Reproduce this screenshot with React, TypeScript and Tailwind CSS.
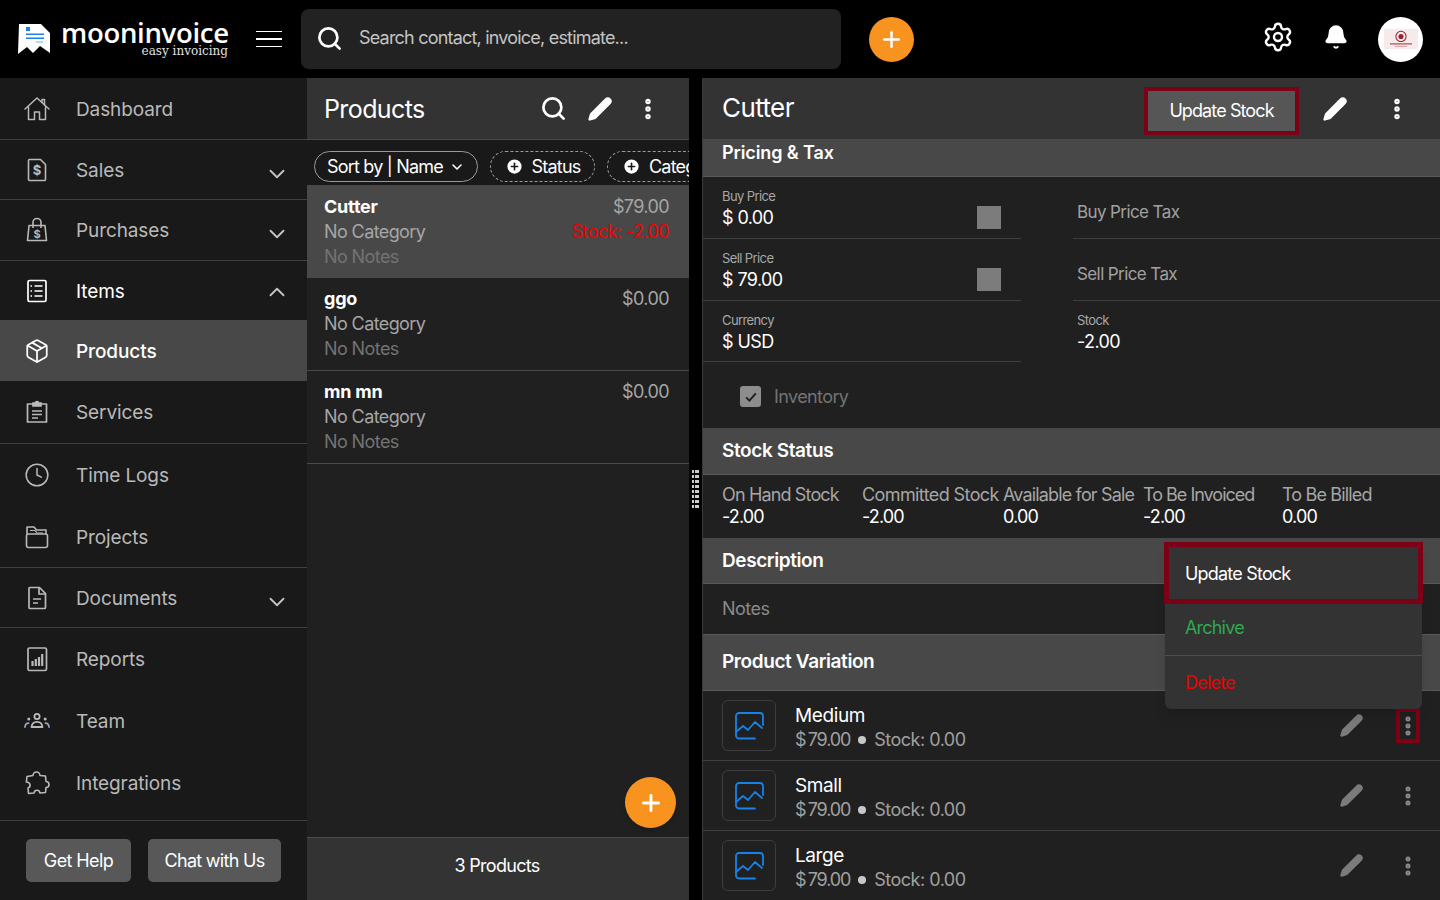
import { useState } from "react";
import {
  Bell,
  ChevronDown,
  ChevronUp,
  CirclePlus,
  Clock,
  MoreVertical,
  Package,
  Pencil,
  Plus,
  Search,
  Settings,
} from "lucide-react";

const iconCls = "w-[26px] h-[26px]";

const HomeIcon = () => (
  <svg viewBox="0 0 26 26" className={iconCls} fill="none" stroke="currentColor" strokeWidth="1.5" strokeLinejoin="round" strokeLinecap="round">
    <path d="M1 13L13 2l12 11" />
    <path d="M18 6.5V3.5h2.5V9" />
    <path d="M4.5 11v12.5h6V16h5v7.5h6V11" />
  </svg>
);

const SalesIcon = () => (
  <svg viewBox="0 0 26 26" className={iconCls} fill="none" stroke="currentColor" strokeWidth="1.6">
    <path d="M4.5 3.5a1 1 0 0 1 1-1h11l5 5v15a1 1 0 0 1-1 1h-15a1 1 0 0 1-1-1z" strokeLinejoin="round" />
    <text x="13" y="18" textAnchor="middle" fontSize="13" fontWeight="700" fill="currentColor" stroke="none">$</text>
  </svg>
);

const BagIcon = () => (
  <svg viewBox="0 0 26 26" className={iconCls} fill="none" stroke="currentColor" strokeWidth="1.6">
    <path d="M5 8.5h16l1.5 15h-19z" strokeLinejoin="round" />
    <path d="M9 11V5.5a4 4 0 0 1 8 0V11" />
    <text x="13" y="21" textAnchor="middle" fontSize="11" fontWeight="700" fill="currentColor" stroke="none">$</text>
  </svg>
);

const ItemsIcon = () => (
  <svg viewBox="0 0 26 26" className={iconCls} fill="none" stroke="currentColor" strokeWidth="1.7">
    <rect x="4" y="2.5" width="18" height="21" rx="1.5" />
    <path d="M10.5 8h8M10.5 13h8M10.5 18h8" />
    <path d="M6.5 8h1.5M6.5 13h1.5M6.5 18h1.5" />
  </svg>
);

const ServicesIcon = () => (
  <svg viewBox="0 0 26 26" className={iconCls} fill="none" stroke="currentColor" strokeWidth="1.7">
    <path d="M9 5H3.5v18h19V5H17" strokeLinejoin="round" />
    <path d="M9 7V4h2.5a1.5 1.5 0 0 1 3 0H17v3z" fill="currentColor" />
    <path d="M8 12h10M8 15.5h10M8 19h6" />
  </svg>
);

const FolderIcon = () => (
  <svg viewBox="0 0 26 26" className={iconCls} fill="none" stroke="currentColor" strokeWidth="1.6" strokeLinejoin="round">
    <path d="M3 10V3h7l2.5 3H22v4" />
    <path d="M6 6.5h5l2 2.5h6" strokeWidth="1.2" />
    <rect x="2.5" y="10" width="21" height="13.5" rx="2" />
  </svg>
);

const DocIcon = () => (
  <svg viewBox="0 0 26 26" className={iconCls} fill="none" stroke="currentColor" strokeWidth="1.7">
    <path d="M5 3.5a1 1 0 0 1 1-1h9.5l6 6v14a1 1 0 0 1-1 1H6a1 1 0 0 1-1-1z" strokeLinejoin="round" />
    <path d="M15 3v6h6M9 14h8M9 18h5" />
  </svg>
);

const ReportsIcon = () => (
  <svg viewBox="0 0 26 26" className={iconCls} fill="none" stroke="currentColor" strokeWidth="1.7">
    <rect x="4" y="2" width="18.5" height="22.5" rx="1.5" />
    <path d="M8.5 20v-5M11.8 20v-7M15 20v-9M18.2 20V8" strokeWidth="2.2" />
  </svg>
);

const TeamIcon = () => (
  <svg viewBox="0 0 26 26" className={iconCls} fill="none" stroke="currentColor" strokeWidth="1.8" strokeLinecap="round">
    <circle cx="13" cy="8.5" r="2.6" />
    <path d="M7.5 19c.4-3.6 2.600-5.200 5.500-5.200s5.100 1.600 5.500 5.200z" strokeLinejoin="round" />
    <circle cx="4.800" cy="11" r="1.500" fill="currentColor" stroke="none" />
    <circle cx="21.200" cy="11" r="1.500" fill="currentColor" stroke="none" />
    <path d="M1 19c.2-2.300 1.400-3.700 3.500-3.800M25 19c-.2-2.300-1.400-3.700-3.500-3.800" stroke="#8fa6c4" />
  </svg>
);

const PuzzleIcon = () => (
  <svg viewBox="0 0 26 26" className={iconCls} fill="none" stroke="currentColor" strokeWidth="1.6" strokeLinejoin="round">
    <path d="M9 5.500c0-2 1.600-3.500 3.500-3.500S16 3.500 16 5.500l5.500.5.500 5.500c1.800 0 3 1.300 3 3s-1.200 3-3 3l-.5 5-5.500.5c-.3-1.800-1.500-2.800-3-2.800S10.300 21.200 10 23l-5.500.5-.5-5.500c1.500-.5 2.300-1.800 2-3.300S4.300 12 2.300 12L3 6.500z" />
  </svg>
);

const nav = [
  { label: "Dashboard", icon: <HomeIcon />, h: "h-[62px]", line: true },
  { label: "Sales", icon: <SalesIcon />, h: "h-[60px]", line: true, chev: "down" },
  { label: "Purchases", icon: <BagIcon />, h: "h-[61px]", line: true, chev: "down" },
  { label: "Items", icon: <ItemsIcon />, h: "h-[59px]", chev: "up", bright: true },
  { label: "Products", icon: <Package className={iconCls} strokeWidth={1.6} />, h: "h-[61px]", active: true },
  { label: "Services", icon: <ServicesIcon />, h: "h-[63px]", line: true },
  { label: "Time Logs", icon: <Clock className={iconCls} strokeWidth={1.4} />, h: "h-[62px]" },
  { label: "Projects", icon: <FolderIcon />, h: "h-[62px]", line: true },
  { label: "Documents", icon: <DocIcon />, h: "h-[60px]", line: true, chev: "down" },
  { label: "Reports", icon: <ReportsIcon />, h: "h-[62px]" },
  { label: "Team", icon: <TeamIcon />, h: "h-[62px]" },
  { label: "Integrations", icon: <PuzzleIcon />, h: "h-[69px] pb-[7px]", line: true },
];

const products = [
  { name: "Cutter", price: "$79.00", stock: "Stock: -2.00", active: true },
  { name: "ggo", price: "$0.00" },
  { name: "mn mn", price: "$0.00" },
];

const variations = ["Medium", "Small", "Large"];

const stats = [
  { label: "On Hand Stock", value: "-2.00", w: "w-[140px]", t: "" },
  { label: "Committed Stock", value: "-2.00", w: "w-[141px]", t: "tracking-[-0.6px]" },
  { label: "Available for Sale", value: "0.00", w: "w-[140px]", t: "" },
  { label: "To Be Invoiced", value: "-2.00", w: "w-[139px]", t: "tracking-[-1px]" },
  { label: "To Be Billed", value: "0.00", w: "w-[120px]", t: "" },
];

const Logo = () => (
  <svg viewBox="0 0 34 32" className="w-[34px] h-[32px]">
    <path d="M1 1H23L32 10V30L22 23L15 30L9 24L0 31Z" fill="#fff" />
    <rect x="8" y="4" width="4" height="4" fill="#1e7fe8" />
    <rect x="8" y="10.500" width="18" height="1.500" fill="#1e7fe8" />
    <rect x="8" y="14.500" width="18" height="1.500" fill="#1e7fe8" />
    <rect x="18" y="18.500" width="7" height="1" fill="#7aa9df" />
  </svg>
);

const ImageBox = () => (
  <div className="w-[54px] h-[51px] rounded-md border border-[#3d3d3d] flex items-center justify-center">
    <svg viewBox="0 0 30 30" className="w-[30px] h-[30px]" fill="none" stroke="#1583ea" strokeWidth="1.8" strokeLinejoin="round" strokeLinecap="round">
      <path d="M21 27.500H5a3 3 0 0 1-3-3V5a3 3 0 0 1 3-3h21a3 3 0 0 1 3 3v9" />
      <path d="M2 21l7-6 5 4 7-8 7 6" />
    </svg>
  </div>
);

const Field = ({ label, value, stepper, sub, wide, last }: { label?: string; value: string; stepper?: boolean; sub?: boolean; wide?: boolean; last?: boolean }) => (
  <div className={`${wide ? "w-[367px] pl-1" : "w-[318px] pl-[19px]"} ${last ? "h-[61px]" : "h-[62px]"} ${sub ? "" : "border-b border-[#3f3f3f]"} flex items-start justify-between`}>
    {label ? (
      <div className="pt-[11px]">
        <div className="text-[13px] leading-[16px] text-[#a8a8a8] tracking-[-0.6px]">{label}</div>
        <div className="text-[18px] leading-[27px] text-white tracking-[-0.6px]">{value}</div>
      </div>
    ) : (
      <div className="text-[17px] leading-[24px] text-[#a0a0a0] tracking-[-0.6px] mt-[23px]">{value}</div>
    )}
    {stepper && <div className="w-6 h-[23px] bg-[#7c7c7c] mr-5 mt-[29px]" />}
  </div>
);

const SectionHead = ({ title, h }: { title: string; h: string }) => (
  <div className={`${h} bg-[#484848] border-b border-[#5a5a5a] px-[19px] flex items-center text-[19px] font-semibold text-white tracking-[-0.4px]`}>
    {title}
  </div>
);

export default function App() {
  const [sel] = useState("Products");

  return (
    <div className="h-screen w-[1440px] overflow-hidden bg-black flex flex-col font-[Inter,'Noto_Sans',sans-serif]">
      {/* top bar */}
      <header className="h-[78px] shrink-0 flex items-center bg-black">
        <div className="w-[301px] flex items-center pl-[18px]">
          <Logo />
          <div className="ml-[9px] w-[172px]">
            <div className="font-['Open_Sans',sans-serif] text-[27.5px] leading-[24px] font-semibold text-white tracking-[-0.3px]">mooninvoice</div>
            <div className="font-['DejaVu_Serif',serif] text-[12px] leading-[12px] text-[#e0e0e0] text-right pr-[5px]">easy invoicing</div>
          </div>
          <div className="ml-[23px] w-[26px] flex flex-col gap-[6px]">
            <div className="h-[1.5px] bg-white" />
            <div className="h-[1.5px] bg-white" />
            <div className="h-[1.5px] bg-white" />
          </div>
        </div>
        <div className="w-[540px] h-[60px] bg-[#222222] rounded-lg flex items-center pl-[15px] -mt-[1px]">
          <Search className="w-[27px] h-[27px] text-white" strokeWidth={2.4} />
          <span className="ml-[16px] -mt-[2px] text-[18px] text-[#c4c4c4] tracking-[-0.8px]">Search contact, invoice, estimate...</span>
        </div>
        <button className="ml-[28px] w-[45px] h-[45px] rounded-full bg-[#f7931e] flex items-center justify-center">
          <Plus className="w-[25px] h-[25px] text-white" strokeWidth={2.4} />
        </button>
        <div className="ml-auto flex items-center">
          <Settings className="w-[32px] h-[32px] text-white -mt-1" strokeWidth={1.8} />
          <Bell className="ml-[29px] w-[26px] h-[26px] text-white fill-white -mt-1" strokeWidth={1.5} />
          <div className="ml-[29px] mr-[17px] w-[45px] h-[45px] rounded-full bg-white flex flex-col items-center justify-center">
            <svg viewBox="0 0 40 24" className="w-[34px] h-[22px]">
              <rect width="40" height="24" fill="#f7eaea" />
              <circle cx="20" cy="9" r="6" fill="none" stroke="#96222d" strokeWidth="1.2" />
              <circle cx="20" cy="9" r="3" fill="#96222d" />
              <rect x="7" y="17" width="26" height="1.500" fill="#b4545c" />
              <rect x="13" y="20" width="14" height="1" fill="#c98a8f" />
            </svg>
          </div>
        </div>
      </header>

      <div className="flex-1 flex min-h-0">
        {/* sidebar */}
        <aside className="w-[307px] shrink-0 bg-[#191919] flex flex-col">
          {nav.map((n) => {
            const on = n.label === sel;
            return (
              <div
                key={n.label}
                className={`${n.h} shrink-0 flex items-center pl-[24px] pr-[17px] ${on ? "bg-[#484848] text-white" : n.bright ? "text-white" : "text-[#b9b9b9]"} ${n.line ? "border-b border-[#3f4144]" : ""}`}
              >
                <span className="w-[26px] h-[26px] flex items-center justify-center">{n.icon}</span>
                <span className={`ml-[26px] mt-[3px] text-[19px] ${on ? "font-medium" : ""} tracking-[-0.1px]`}>{n.label}</span>
                {n.chev === "down" && <ChevronDown className="ml-auto w-[26px] h-[26px] mt-[8px] text-[#c4c4c4]" strokeWidth={1.7} />}
                {n.chev === "up" && <ChevronUp className="ml-auto w-[26px] h-[26px] mt-[3px] text-[#c4c4c4]" strokeWidth={1.7} />}
              </div>
            );
          })}
          <div className="flex gap-[17px] pl-[26px] pt-[18px]">
            <button className="w-[105px] h-[43px] rounded-[5px] bg-[#585858] text-[18px] text-white tracking-[-0.6px]">Get Help</button>
            <button className="w-[133px] h-[43px] rounded-[5px] bg-[#585858] text-[18px] text-white tracking-[-0.7px]">Chat with Us</button>
          </div>
        </aside>

        {/* product list */}
        <section className="relative w-[382px] shrink-0 bg-[#202020] flex flex-col">
          <div className="h-[62px] shrink-0 bg-[#333333] border-b border-[#4a4a4a] flex items-center pl-[17px] pr-[28px]">
            <h1 className="text-[25px] text-white tracking-[-0.6px] mt-[3px]">Products</h1>
            <Search className="ml-auto w-[27px] h-[27px] text-white" strokeWidth={2.4} />
            <Pencil className="ml-[20px] w-[26px] h-[26px] text-white fill-white" strokeWidth={1.5} />
            <MoreVertical className="ml-[22px] w-[26px] h-[26px] text-white" strokeWidth={3} />
          </div>
          <div className="h-[45px] shrink-0 bg-[#191919] flex items-end pb-[3px] pl-[7px] gap-3 overflow-hidden whitespace-nowrap text-white text-[18px] tracking-[-0.8px]">
            <div className="w-[164px] h-[31px] shrink-0 rounded-full border border-[#9a9a9a] flex items-center justify-center gap-1.5">
              Sort by | Name
              <ChevronDown className="w-4 h-4" strokeWidth={2.4} />
            </div>
            <div className="w-[105px] h-[31px] shrink-0 rounded-full border border-dashed border-[#9a9a9a] flex items-center justify-center gap-2">
              <CirclePlus className="w-[19px] h-[19px] fill-white text-[#191919]" strokeWidth={2} />
              Status
            </div>
            <div className="w-[124px] h-[31px] shrink-0 rounded-full border border-dashed border-[#9a9a9a] flex items-center pl-[14px] gap-2">
              <CirclePlus className="w-[19px] h-[19px] shrink-0 fill-white text-[#191919]" strokeWidth={2} />
              Category
            </div>
          </div>
          {products.map((p) => (
            <div
              key={p.name}
              className={`h-[93px] shrink-0 pl-[17px] pr-5 border-b border-[#4a4a4a] flex justify-between ${p.active ? "bg-[#484848] pt-[9px]" : "pt-[8px]"}`}
            >
              <div className="text-[18px] leading-[25px] tracking-[-0.6px]">
                <div className="font-bold text-white tracking-[-0.2px]">{p.name}</div>
                <div className="text-[#a6a6a6]">No Category</div>
                <div className="text-[#737373]">No Notes</div>
              </div>
              <div className="text-right text-[18px] leading-[25px] tracking-[-0.6px]">
                <div className="text-[#a6a6a6]">{p.price}</div>
                {p.stock && <div className="text-[#f00000]">{p.stock}</div>}
              </div>
            </div>
          ))}
          <button className="absolute left-[318px] top-[699px] w-[51px] h-[51px] rounded-full bg-[#f7931e] flex items-center justify-center shadow-md">
            <Plus className="w-[26px] h-[26px] text-white" strokeWidth={2.6} />
          </button>
          <div className="mt-auto h-[63px] shrink-0 bg-[#333333] border-t border-[#4a4a4a] flex items-center justify-center text-[18px] text-white tracking-[-0.7px] pr-[2px] pb-2">
            3 Products
          </div>
        </section>

        {/* drag handle */}
        <div className="w-[13px] shrink-0 bg-black flex flex-col items-center justify-center gap-[2.5px]">
          {[0, 1, 2, 3, 4, 5, 6, 7].map((i) => (
            <div key={i} className="flex gap-[0.5px]">
              <div className="w-[2px] h-[2.5px] bg-[#cccccc]" />
              <div className="w-[2px] h-[2.5px] bg-[#cccccc]" />
              <div className="w-[2px] h-[2.5px] bg-[#cccccc]" />
            </div>
          ))}
        </div>

        {/* detail */}
        <section className="relative flex-1 bg-[#202020] flex flex-col min-w-0 border-l border-[#3a3a3a]">
          <div className="h-[62px] shrink-0 bg-[#333333] border-b border-[#4a4a4a] flex items-center pl-[19px] pr-[30px]">
            <h2 className="text-[26px] text-white tracking-[-0.6px] -mt-[3px]">Cutter</h2>
            <div className="ml-auto mt-[4px] border-[4px] border-[#7d0016] w-[155px] h-[48px] bg-[#565656] flex items-center justify-center text-[18px] text-white tracking-[-0.9px]">
              Update Stock
            </div>
            <Pencil className="ml-[23px] w-[26px] h-[26px] text-white fill-white" strokeWidth={1.5} />
            <MoreVertical className="ml-[36px] w-[26px] h-[26px] text-white" strokeWidth={3} />
          </div>

          <div className="h-[37px] shrink-0 bg-[#484848] border-b border-[#5a5a5a] px-[19px] pt-[1px] text-[18px] leading-[24px] font-semibold text-white tracking-[-0.1px]">
            Pricing &amp; Tax
          </div>

          <div className="h-[251px] shrink-0 flex flex-col">
            <div className="flex gap-[52px]">
              <div className="flex flex-col">
                <Field label="Buy Price" value="$ 0.00" stepper />
                <Field label="Sell Price" value="$ 79.00" stepper />
                <Field label="Currency" value="$ USD" last />
              </div>
              <div className="flex flex-col">
                <Field value="Buy Price Tax" wide />
                <Field value="Sell Price Tax" wide />
                <Field label="Stock" value="-2.00" wide sub last />
              </div>
            </div>
            <div className="flex items-center pl-[37px] pt-[21px] gap-[13px]">
              <div className="w-[21px] h-[21px] rounded-[3px] bg-[#8d8d8d] flex items-center justify-center">
                <svg viewBox="0 0 20 20" className="w-4 h-4" fill="none" stroke="#202020" strokeWidth="2.4">
                  <path d="M4 10.500l4 4 8-9" />
                </svg>
              </div>
              <span className="text-[18px] text-[#737373] tracking-[-0.6px]">Inventory</span>
            </div>
          </div>

          <SectionHead title="Stock Status" h="h-[47px] shrink-0" />
          <div className="h-[63px] shrink-0 flex pl-[19px] pt-[9px] whitespace-nowrap text-[18px] leading-[22px] tracking-[-0.85px]">
            {stats.map((s) => (
              <div key={s.label} className={s.w}>
                <div className={`text-[#a6a6a6] ${s.t}`}>{s.label}</div>
                <div className="text-white">{s.value}</div>
              </div>
            ))}
          </div>
          <SectionHead title="Description" h="h-[46px] shrink-0 pt-[2px]" />
          <div className="h-[50px] shrink-0 px-[19px] pb-[2px] flex items-center text-[18px] text-[#8a8a8a] tracking-[-0.5px]">Notes</div>
          <SectionHead title="Product Variation" h="h-[57px] shrink-0 border-t" />

          {variations.map((v, i) => (
            <div key={v} className="h-[70px] shrink-0 border-b border-[#3f3f3f] last:border-b-0 flex items-center pl-[19px] pr-[20px]">
              <ImageBox />
              <div className="ml-[19px] mt-[5px]">
                <div className="text-[19px] leading-[24px] text-white tracking-[-0.4px]">{v}</div>
                <div className="flex items-center text-[18px] leading-[24px] text-[#a0a0a0] tracking-[-0.5px]">
                  <span className="tracking-[-1.1px]">${"\u2009"}79.00</span>
                  <span className="mx-2 w-2 h-2 rounded-full bg-[#c8c8c8]" />
                  Stock: 0.00
                </div>
              </div>
              <Pencil className="ml-auto w-[25px] h-[25px] text-[#7b7b7b] fill-[#7b7b7b]" strokeWidth={1.5} />
              {i === 0 ? (
                <div className="ml-[32px] w-6 h-[35px] border-[4px] border-[#7d0016] flex items-center justify-center">
                  <MoreVertical className="w-[24px] h-[24px] shrink-0 text-[#8a8a8a]" strokeWidth={3} />
                </div>
              ) : (
                <MoreVertical className="ml-[32px] w-6 h-6 text-[#8a8a8a]" strokeWidth={3} />
              )}
            </div>
          ))}

          {/* actions menu */}
          <div className="absolute left-[462px] top-[464px] w-[257px] rounded-b-md bg-[#333333] shadow-lg text-[18px] tracking-[-0.8px]">
            <div className="h-[62px] -mx-[1px] border-[5px] border-[#7d0016] flex items-center pl-[16px] text-white">Update Stock</div>
            <div className="h-[52px] border-b border-[#4d4d4d] flex items-center pl-[20px] pb-1 text-[#2fa84f]">Archive</div>
            <div className="h-[53px] flex items-center pl-[20px] text-[#ee0000]">Delete</div>
          </div>
        </section>
      </div>
    </div>
  );
}
